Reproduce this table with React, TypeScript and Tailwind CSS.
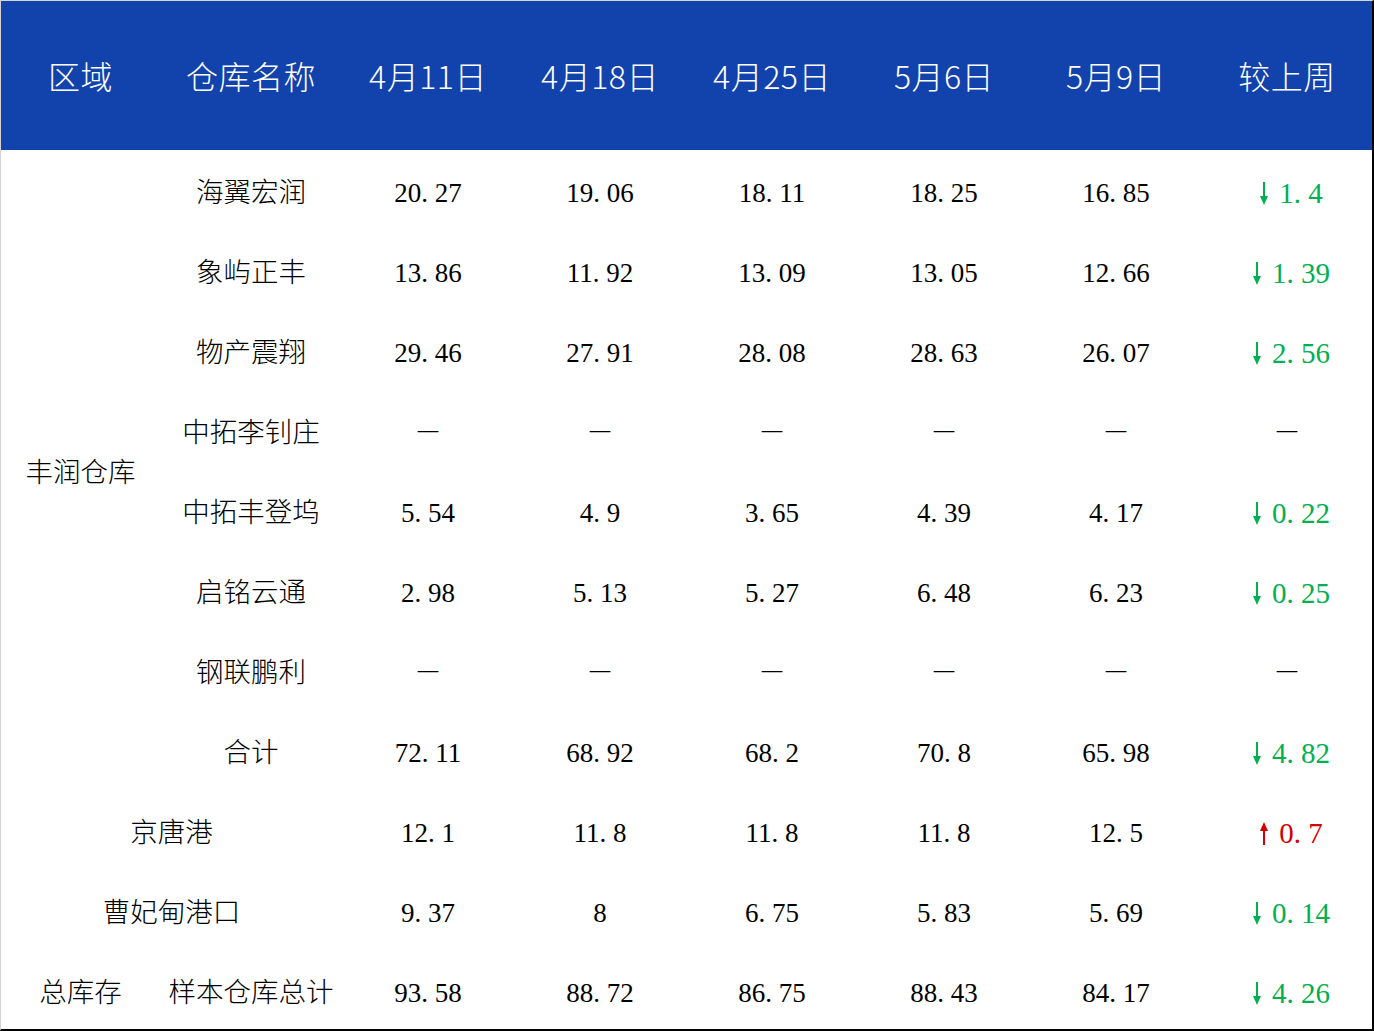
import React from "react";

const cn = '"Noto Sans CJK SC", "Noto Sans", sans-serif';
const num = '"Liberation Serif", "Noto Sans CJK SC", serif';

type Delta = { dir: "up" | "down"; v: string } | null;

const headers = ["区域", "仓库名称", "4月11日", "4月18日", "4月25日", "5月6日", "5月9日", "较上周"];

function Num({ v, size = "text-[27px]" }: { v: string; size?: string }) {
  if (v === "—") {
    return (
      <span style={{ fontFamily: cn }} className="text-[26px] font-light mb-[12px]">
        —
      </span>
    );
  }
  const parts = v.split(".");
  return (
    <span style={{ fontFamily: num }} className={`${size} leading-none whitespace-nowrap`}>
      {parts[0]}
      {parts.length > 1 && (
        <>
          <span className="inline-block w-[0.5em] text-left">.</span>
          {parts[1]}
        </>
      )}
    </span>
  );
}

function Arrow({ dir }: { dir: "up" | "down" }) {
  const color = dir === "down" ? "#00b050" : "#d40000";
  return (
    <svg width="10" height="25" viewBox="0 0 10 25" className="shrink-0">
      {dir === "down" ? (
        <>
          <line x1="5" y1="1" x2="5" y2="18" stroke={color} strokeWidth="2" />
          <polygon points="1,15 9,15 5,24" fill={color} />
        </>
      ) : (
        <>
          <line x1="5" y1="7" x2="5" y2="24" stroke={color} strokeWidth="2" />
          <polygon points="1,10 9,10 5,1" fill={color} />
        </>
      )}
    </svg>
  );
}

function DeltaCell({ d }: { d: Delta }) {
  if (!d) return <Num v="—" />;
  const color = d.dir === "down" ? "text-[#00b050]" : "text-[#d40000]";
  return (
    <div className={`flex items-center gap-[10px] pl-[8px] ${color}`}>
      <Arrow dir={d.dir} />
      <Num v={d.v} size="text-[29px]" />
    </div>
  );
}

const fengrun: { name: string; vals: string[]; d: Delta }[] = [
  { name: "海翼宏润", vals: ["20.27", "19.06", "18.11", "18.25", "16.85"], d: { dir: "down", v: "1.4" } },
  { name: "象屿正丰", vals: ["13.86", "11.92", "13.09", "13.05", "12.66"], d: { dir: "down", v: "1.39" } },
  { name: "物产震翔", vals: ["29.46", "27.91", "28.08", "28.63", "26.07"], d: { dir: "down", v: "2.56" } },
  { name: "中拓李钊庄", vals: ["—", "—", "—", "—", "—"], d: null },
  { name: "中拓丰登坞", vals: ["5.54", "4.9", "3.65", "4.39", "4.17"], d: { dir: "down", v: "0.22" } },
  { name: "启铭云通", vals: ["2.98", "5.13", "5.27", "6.48", "6.23"], d: { dir: "down", v: "0.25" } },
  { name: "钢联鹏利", vals: ["—", "—", "—", "—", "—"], d: null },
  { name: "合计", vals: ["72.11", "68.92", "68.2", "70.8", "65.98"], d: { dir: "down", v: "4.82" } },
];

const Cell = ({ children, className = "" }: { children: React.ReactNode; className?: string }) => (
  <div className={`flex items-center justify-center pt-[6px] ${className}`}>{children}</div>
);

const Label = ({ t }: { t: string }) => (
  <span style={{ fontFamily: cn }} className="text-[27.5px] font-light text-black whitespace-nowrap mb-[5px]">
    {t}
  </span>
);

export default function App() {
  return (
    <div className="w-[1374px] h-[1031px] bg-white border-t border-l border-t-[#d4d4d4] border-l-[#d4d4d4] border-r-2 border-b-2 border-r-black border-b-black overflow-hidden">
      <div className="grid grid-cols-[159px_182px_172px_172px_172px_172px_172px_170px] grid-rows-[149px_repeat(11,80px)]">
        {headers.map((h) => (
          <div key={h} className="bg-[#1242ab] flex items-center justify-center pb-[1px]">
            <span style={{ fontFamily: cn }} className="text-white text-[32px] font-light tracking-[0.5px] whitespace-nowrap">
              {h}
            </span>
          </div>
        ))}

        <Cell className="row-start-2 row-span-8 col-start-1">
          <Label t="丰润仓库" />
        </Cell>
        {fengrun.map((r) => (
          <React.Fragment key={r.name}>
            <Cell className="col-start-2">
              <Label t={r.name} />
            </Cell>
            {r.vals.map((v, j) => (
              <Cell key={j}>
                <Num v={v} />
              </Cell>
            ))}
            <Cell>
              <DeltaCell d={r.d} />
            </Cell>
          </React.Fragment>
        ))}

        <Cell className="col-start-1 col-span-2">
          <Label t="京唐港" />
        </Cell>
        {["12.1", "11.8", "11.8", "11.8", "12.5"].map((v, j) => (
          <Cell key={j}>
            <Num v={v} />
          </Cell>
        ))}
        <Cell>
          <DeltaCell d={{ dir: "up", v: "0.7" }} />
        </Cell>

        <Cell className="col-start-1 col-span-2">
          <Label t="曹妃甸港口" />
        </Cell>
        {["9.37", "8", "6.75", "5.83", "5.69"].map((v, j) => (
          <Cell key={j}>
            <Num v={v} />
          </Cell>
        ))}
        <Cell>
          <DeltaCell d={{ dir: "down", v: "0.14" }} />
        </Cell>

        <Cell className="col-start-1">
          <Label t="总库存" />
        </Cell>
        <Cell>
          <Label t="样本仓库总计" />
        </Cell>
        {["93.58", "88.72", "86.75", "88.43", "84.17"].map((v, j) => (
          <Cell key={j}>
            <Num v={v} />
          </Cell>
        ))}
        <Cell>
          <DeltaCell d={{ dir: "down", v: "4.26" }} />
        </Cell>
      </div>
    </div>
  );
}
